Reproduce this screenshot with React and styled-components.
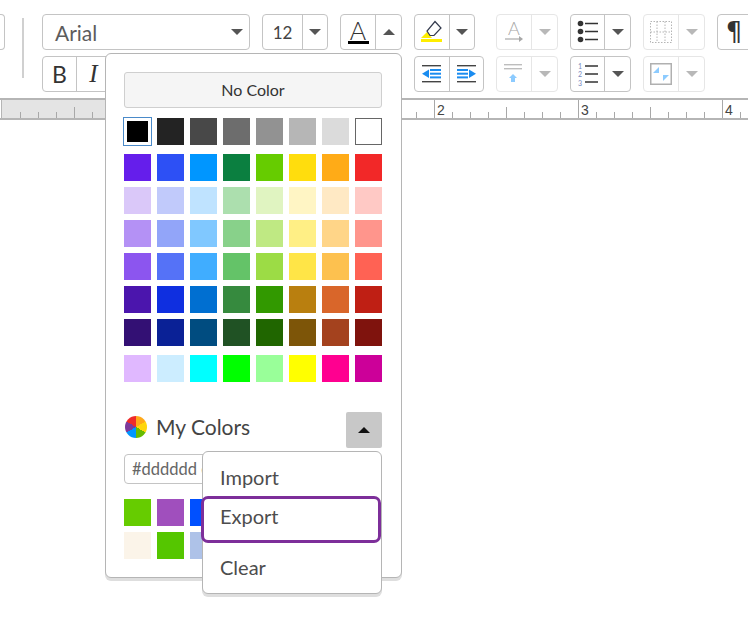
import React from 'react'
import styled, { createGlobalStyle } from 'styled-components'

const GlobalStyle = createGlobalStyle`
	html, body {
		margin: 0;
		padding: 0;
		background: #fff;
	}
	body {
		font-family: Lato, 'Open Sans', sans-serif;
		color: #333;
	}
`

const Page = styled.div`
	position: relative;
	width: 748px;
	height: 636px;
	overflow: hidden;
	background: #fff;
`

const Toolbar = styled.div`
	display: flex;
	height: 98px;
	box-sizing: border-box;
	padding-top: 14px;
	overflow: hidden;
`

const StubButton = styled.div`
	flex: none;
	width: 5px;
	height: 36px;
	box-sizing: border-box;
	border: 1px solid #c4c4c4;
	border-left: none;
	border-radius: 0 4px 4px 0;
`

const Separator = styled.div`
	flex: none;
	width: 2px;
	height: 60px;
	margin: 4px 18px 0 17px;
	background: #d0d0d0;
`

const Rows = styled.div`
	display: flex;
	flex: none;
	flex-direction: column;
	gap: 6px;
`

const Row = styled.div`
	display: flex;
`

const Group = styled.div`
	display: flex;
	flex: none;
	height: 36px;
	box-sizing: border-box;
	margin-left: ${p => p.$ml || 0}px;
	border: 1px solid ${p => (p.$off ? '#e6e6e6' : '#c4c4c4')};
	border-radius: 4px;
	background: #fff;
`

const Cell = styled.div`
	display: flex;
	flex-direction: ${p => (p.$col ? 'column' : 'row')};
	align-items: center;
	justify-content: center;
	box-sizing: border-box;
	width: ${p => p.$w}px;
	flex: none;
	border-right: 1px solid ${p => (p.$off ? '#e6e6e6' : '#c4c4c4')};
	&:last-child {
		border-right: none;
	}
`

const Caret = styled.span`
	width: 0;
	height: 0;
	border-left: 6px solid transparent;
	border-right: 6px solid transparent;
	border-top: ${p => (p.$up ? 'none' : `6px solid ${p.$off ? '#b8b8b8' : '#555'}`)};
	border-bottom: ${p => (p.$up ? `6px solid ${p.$dark ? '#111' : '#555'}` : 'none')};
`

const FontSelect = styled.div`
	display: flex;
	flex: none;
	align-items: center;
	justify-content: space-between;
	width: 208px;
	height: 36px;
	box-sizing: border-box;
	padding: 0 1px 0 12px;
	border: 1px solid #c4c4c4;
	border-radius: 4px;
	font-size: 21px;
	color: #5c5c5c;
`

const SelectCaret = styled.span`
	display: flex;
	width: 17px;
`

const SizeText = styled.span`
	font-size: 17px;
	color: #444;
`

const GlyphA = styled.span`
	font-size: 25px;
	font-weight: 300;
	line-height: 19px;
	color: #333;
	margin-top: 1px;
`

const FlowGlyph = styled.span`
	font-size: 18px;
	font-weight: 300;
	line-height: 14px;
	color: #a8a8a8;
`

const ColorBar = styled.span`
	width: 21px;
	height: 3px;
	margin-top: 1px;
	background: #000;
`

const BoldGlyph = styled.span`
	font-size: 23px;
	color: #333;
`

const ItalicGlyph = styled.span`
	font-family: 'Liberation Serif', serif;
	font-style: italic;
	font-size: 25px;
	color: #333;
`

const Pilcrow = styled.span`
	padding-right: 4px;
	font-family: 'DejaVu Sans', sans-serif;
	font-size: 26px;
	line-height: 30px;
	color: #333;
`

const Ruler = styled.div`
	display: flex;
	height: 22px;
	box-sizing: border-box;
	border-top: 2px solid #b5b5b5;
	border-bottom: 2px solid #b5b5b5;
	padding-left: 1px;
	overflow: hidden;
`

const RulerEdge = styled.div`
	flex: none;
	width: 2px;
	box-sizing: border-box;
	border-left: 1px solid #b5b5b5;
	background: #e4e4e4;
`

const RulerCell = styled.div`
	display: flex;
	flex: none;
	align-items: flex-end;
	justify-content: space-between;
	width: 18px;
	height: 100%;
	background: ${p => (p.$margin ? '#e4e4e4' : '#fff')};
`

const RulerLabel = styled.span`
	align-self: flex-start;
	margin: 2px 0 0 2px;
	font-family: 'Liberation Sans', sans-serif;
	font-size: 14px;
	line-height: 16px;
	color: #444;
`

const Tick = styled.span`
	flex: none;
	margin-left: auto;
	width: 1px;
	height: ${p => p.$h}px;
	background: #a8a8a8;
`

const Popover = styled.div`
	position: absolute;
	left: 105px;
	top: 53px;
	width: 297px;
	box-sizing: border-box;
	padding: 18px 19px 18px 18px;
	border: 1px solid #b5b5b5;
	border-radius: 6px;
	background: #fff;
	box-shadow: 0 3px 0 #dedede;
`

const NoColorButton = styled.button`
	display: block;
	width: 258px;
	height: 36px;
	padding: 0 0 2px;
	border: 1px solid #cfcfcf;
	border-radius: 3px;
	background: #f5f5f5;
	font-family: inherit;
	font-size: 16px;
	color: #333;
`

const SwatchGrid = styled.div`
	display: grid;
	grid-template-columns: repeat(8, 27px);
	gap: 6px;
	margin-top: ${p => p.$mt}px;
`

const Swatch = styled.div`
	width: 27px;
	height: 27px;
	box-sizing: border-box;
	background: ${p => p.$c};
	border: ${p => (p.$outlined ? '1.5px solid #666' : 'none')};
`

const SelectedSwatch = styled(Swatch)`
	background-clip: content-box;
	padding: 3px;
	margin: -1px;
	width: 29px;
	height: 29px;
	border: 1px solid #4a8ac9;
`

const MyColorsHeader = styled.div`
	display: flex;
	align-items: center;
	justify-content: space-between;
	height: 36px;
	margin-top: 30px;
`

const MyColorsLabel = styled.div`
	display: flex;
	align-items: center;
	margin-bottom: 6px;
`

const ColorWheel = styled.span`
	width: 22px;
	height: 22px;
	margin: 0 9px 0 1px;
	border-radius: 50%;
	background: conic-gradient(
		#ffa91a 0 60deg,
		#ffd60d 60deg 120deg,
		#66bb00 120deg 180deg,
		#0096ff 180deg 240deg,
		#7d3a9a 240deg 300deg,
		#ee2a2a 300deg 360deg
	);
`

const MyColorsTitle = styled.span`
	margin-bottom: 2px;
	font-size: 21px;
	color: #444;
`

const ToggleButton = styled.div`
	display: flex;
	align-items: center;
	justify-content: center;
	width: 36px;
	height: 36px;
	border-radius: 2px;
	background: #c8c8c8;
`

const HexInput = styled.input`
	display: block;
	width: 200px;
	height: 30px;
	box-sizing: border-box;
	margin-top: 6px;
	padding: 0 7px;
	border: 1px solid #c4c4c4;
	border-radius: 4px;
	outline: none;
	font-family: inherit;
	font-size: 16.5px;
	color: #666;
	&::placeholder {
		color: #666;
		opacity: 1;
	}
`

const Menu = styled.div`
	position: absolute;
	left: 96px;
	top: 397px;
	width: 180px;
	height: 143px;
	box-sizing: border-box;
	padding-top: 5px;
	border: 1px solid #b5b5b5;
	border-radius: 6px;
	background: #fff;
	box-shadow: 0 3px 0 #dedede;
`

const MenuItem = styled.div`
	display: flex;
	align-items: center;
	height: ${p => p.$h}px;
	box-sizing: border-box;
	padding-left: 17px;
	font-size: 20px;
	color: #4d4d4d;
`

const ActiveMenuItem = styled(MenuItem)`
	margin: 0 0 0 -2px;
	width: 180px;
	padding: 0 0 8px 16px;
	border: 3px solid #7d2f9a;
	border-radius: 7px;
`

const theme = ['#000000', '#232323', '#484848', '#6d6d6d', '#929292', '#b6b6b6', '#dbdbdb', '#ffffff']

const palette = [
	['#651eeb', '#2d50f5', '#0096ff', '#0b7f40', '#66cc00', '#ffdd0d', '#ffab17', '#f22828'],
	['#dac8f9', '#c1cafb', '#bfe3ff', '#acdfae', '#e0f4c1', '#fff5c4', '#ffe9c4', '#ffc9c5'],
	['#b491f5', '#92a5f9', '#80c8ff', '#88d18a', '#bfe983', '#ffef85', '#ffd588', '#ff958c'],
	['#8c55ef', '#5572f7', '#40adff', '#64c368', '#9cdc45', '#ffe547', '#fdc14f', '#ff6254'],
	['#4b15ad', '#0f2fe0', '#006fd1', '#368a3e', '#329900', '#b97f0f', '#d9662a', '#bf1f14'],
	['#331074', '#0a2196', '#004c80', '#205224', '#206600', '#7d5508', '#a4421e', '#7f130d'],
]

const bright = ['#e0b8ff', '#ccedff', '#00ffff', '#00ff00', '#99ff99', '#ffff00', '#ff0090', '#cc0099']

// only the first three of each row show, the menu covers the rest
const myColors = [
	'#66cc00', '#a04fbd', '#0050ff', '#ffffff', '#ffffff', '#ffffff', '#ffffff', '#ffffff',
	'#fbf4e9', '#55c600', '#aec2e8', '#ffffff', '#ffffff', '#ffffff', '#ffffff', '#ffffff',
]

const HighlightIcon = () => (
	<svg width="24" height="24" viewBox="0 0 24 24">
		<path d="M1 18 L7 12 L12 18 Z" fill="#ffee00" />
		<path d="M15 1.5 L21 8 L14 15.5 H10 L7 11 Z" fill="#fff" stroke="#333a4d" strokeWidth="1.2" />
		<rect x="1" y="19" width="21" height="3" fill="#ffee00" />
	</svg>
)

const OutdentIcon = ({ flip }) => (
	<svg width="20" height="18" viewBox="0 0 20 18">
		<rect x="0" y="0" width="19" height="1.4" fill="#444" />
		<rect x="0" y="16" width="19" height="1.4" fill="#444" />
		{flip ? (
			<>
				<path d="M19 8.7 L12 4.5 V13 Z" fill="#1a8cf0" />
				<rect x="0" y="4" width="11" height="2" fill="#1a8cf0" />
				<rect x="0" y="7.7" width="11" height="2" fill="#1a8cf0" />
				<rect x="0" y="11.4" width="11" height="2" fill="#1a8cf0" />
			</>
		) : (
			<>
				<path d="M0 8.7 L7 4.5 V13 Z" fill="#1a8cf0" />
				<rect x="8" y="4" width="11" height="2" fill="#1a8cf0" />
				<rect x="8" y="7.7" width="11" height="2" fill="#1a8cf0" />
				<rect x="8" y="11.4" width="11" height="2" fill="#1a8cf0" />
			</>
		)}
	</svg>
)

const FlowArrow = () => (
	<svg width="20" height="8" viewBox="0 0 20 8">
		<path d="M1 4 H17" stroke="#a8a8a8" strokeWidth="1.2" />
		<path d="M15 1 L19 4 L15 7 Z" fill="#a8a8a8" />
	</svg>
)

const SpacingIcon = () => (
	<svg width="20" height="20" viewBox="0 0 20 20">
		<rect x="0" y="0" width="18" height="1.4" fill="#bdbdbd" />
		<rect x="0" y="4" width="18" height="1.4" fill="#bdbdbd" />
		<path d="M9 10 L13 14 H11 V18 H7 V14 H5 Z" fill="#8ccbff" />
	</svg>
)

const BulletsIcon = () => (
	<svg width="22" height="24" viewBox="0 0 22 24">
		<circle cx="3.5" cy="3.5" r="2.8" fill="#333" />
		<circle cx="3.5" cy="11.5" r="2.8" fill="#333" />
		<circle cx="3.5" cy="19.5" r="2.8" fill="#333" />
		<path d="M8 3.5 H21 M8 11.5 H21 M8 19.5 H21" stroke="#333" strokeWidth="1.4" />
	</svg>
)

const NumbersIcon = () => (
	<svg width="22" height="26" viewBox="0 0 22 26">
		<text x="3" y="8" textAnchor="middle" fontFamily="Lato" fontSize="7" fill="#7a8ac0">1</text>
		<text x="3" y="16.4" textAnchor="middle" fontFamily="Lato" fontSize="7" fill="#7a8ac0">2</text>
		<text x="3" y="24.8" textAnchor="middle" fontFamily="Lato" fontSize="7" fill="#7a8ac0">3</text>
		<path d="M8 5 H21 M8 13 H21 M8 21 H21" stroke="#333" strokeWidth="1.4" />
	</svg>
)

const TableIcon = () => (
	<svg width="22" height="22" viewBox="0 0 22 22">
		<path
			d="M0.5 0.5 H21.5 V21.5 H0.5 Z M7 0.5 V21.5 M15 0.5 V21.5 M0.5 11 H21.5"
			fill="none"
			stroke="#b5b5b5"
			strokeWidth="1"
			strokeDasharray="1.5 1.5"
		/>
	</svg>
)

const AlignIcon = () => (
	<svg width="22" height="22" viewBox="0 0 22 22">
		<rect x="0.75" y="0.75" width="20.5" height="20.5" fill="#fff" stroke="#b0b0b0" strokeWidth="1.5" />
		<path d="M9 4 V10 H3 Z" fill="#8ccbff" />
		<path d="M13 18 V12 H19 Z" fill="#8ccbff" />
	</svg>
)

const rulerCells = Array.from({ length: 42 }, (_, i) => i)

// ticks fall every 18px, the first at x=21; whole inches land on 435, 579, 723
const tickHeight = i => {
	const n = i - 23
	if (n % 8 === 0) return 18
	if (((n % 4) + 4) % 4 === 0) return 11
	return 6
}

const rulerNumber = i => {
	const n = i - 24
	if (n >= 0 && n % 8 === 0) return n / 8 + 2
	return null
}

const App = () => {
	return (
		<Page>
			<GlobalStyle />
			<Toolbar>
				<StubButton />
				<Separator />
				<Rows>
					<Row>
						<FontSelect>
							Arial
							<SelectCaret>
								<Caret />
							</SelectCaret>
						</FontSelect>
						<Group $ml={12}>
							<Cell $w={40}>
								<SizeText>12</SizeText>
							</Cell>
							<Cell $w={24}>
								<Caret />
							</Cell>
						</Group>
						<Group $ml={12}>
							<Cell $w={35} $col>
								<GlyphA>A</GlyphA>
								<ColorBar />
							</Cell>
							<Cell $w={25}>
								<Caret $up />
							</Cell>
						</Group>
						<Group $ml={12}>
							<Cell $w={35}>
								<HighlightIcon />
							</Cell>
							<Cell $w={24}>
								<Caret />
							</Cell>
						</Group>
						<Group $ml={21} $off>
							<Cell $w={35} $off $col>
								<FlowGlyph>A</FlowGlyph>
								<FlowArrow />
							</Cell>
							<Cell $w={25} $off>
								<Caret $off />
							</Cell>
						</Group>
						<Group $ml={12}>
							<Cell $w={34}>
								<BulletsIcon />
							</Cell>
							<Cell $w={25}>
								<Caret />
							</Cell>
						</Group>
						<Group $ml={12} $off>
							<Cell $w={35} $off>
								<TableIcon />
							</Cell>
							<Cell $w={25} $off>
								<Caret $off />
							</Cell>
						</Group>
						<Group $ml={12}>
							<Cell $w={36}>
								<Pilcrow>¶</Pilcrow>
							</Cell>
						</Group>
					</Row>
					<Row>
						<Group>
							<Cell $w={34}>
								<BoldGlyph>B</BoldGlyph>
							</Cell>
							<Cell $w={34}>
								<ItalicGlyph>I</ItalicGlyph>
							</Cell>
							<Cell $w={290} />
						</Group>
						<Group $ml={12}>
							<Cell $w={35}>
								<OutdentIcon />
							</Cell>
							<Cell $w={33}>
								<OutdentIcon flip />
							</Cell>
						</Group>
						<Group $ml={12} $off>
							<Cell $w={35} $off>
								<SpacingIcon />
							</Cell>
							<Cell $w={25} $off>
								<Caret $off />
							</Cell>
						</Group>
						<Group $ml={12}>
							<Cell $w={34}>
								<NumbersIcon />
							</Cell>
							<Cell $w={25}>
								<Caret />
							</Cell>
						</Group>
						<Group $ml={12} $off>
							<Cell $w={35} $off>
								<AlignIcon />
							</Cell>
							<Cell $w={25} $off>
								<Caret $off />
							</Cell>
						</Group>
					</Row>
				</Rows>
			</Toolbar>
			<Ruler>
				<RulerEdge />
				{rulerCells.map(i => (
					<RulerCell key={i} $margin={i < 16}>
						{rulerNumber(i) && <RulerLabel>{rulerNumber(i)}</RulerLabel>}
						<Tick $h={tickHeight(i)} />
					</RulerCell>
				))}
			</Ruler>
			<Popover>
				<NoColorButton>No Color</NoColorButton>
				<SwatchGrid $mt={10}>
					{theme.map((c, i) =>
						i === 0 ? (
							<SelectedSwatch key={c} $c={c} />
						) : (
							<Swatch key={c} $c={c} $outlined={c === '#ffffff'} />
						),
					)}
				</SwatchGrid>
				<SwatchGrid $mt={9}>
					{palette.flat().map(c => (
						<Swatch key={c} $c={c} />
					))}
				</SwatchGrid>
				<SwatchGrid $mt={9}>
					{bright.map(c => (
						<Swatch key={c} $c={c} />
					))}
				</SwatchGrid>
				<MyColorsHeader>
					<MyColorsLabel>
						<ColorWheel />
						<MyColorsTitle>My Colors</MyColorsTitle>
					</MyColorsLabel>
					<ToggleButton>
						<Caret $up $dark />
					</ToggleButton>
				</MyColorsHeader>
				<HexInput readOnly placeholder="#dddddd e.g." />
				<SwatchGrid $mt={15}>
					{myColors.map((c, i) => (
						<Swatch key={i} $c={c} />
					))}
				</SwatchGrid>
				<Menu>
					<MenuItem $h={39}>Import</MenuItem>
					<ActiveMenuItem $h={47}>Export</ActiveMenuItem>
					<MenuItem $h={48}>Clear</MenuItem>
				</Menu>
			</Popover>
		</Page>
	)
}

export default App
